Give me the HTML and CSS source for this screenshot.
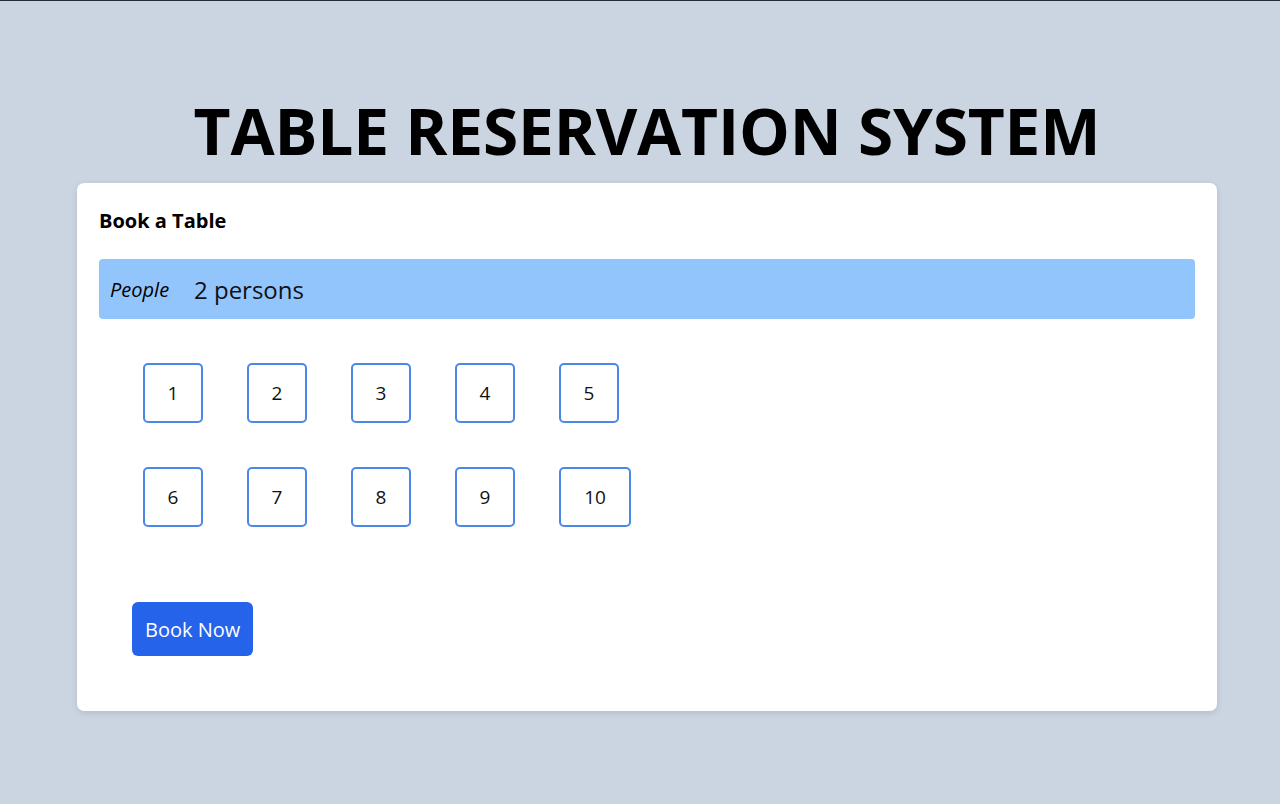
FILE: index.html
```html
<!DOCTYPE html>
<html lang="en">
<head>
<meta charset="utf-8">
<title>Table Reservation System</title>
<link rel="stylesheet" href="styles.css">
</head>
<body>
<div class="page">
  <h1 class="title">TABLE RESERVATION SYSTEM</h1>
  <div class="card">
    <h2 class="card-title">Book a Table</h2>
    <div class="people-bar">
      <span class="people-label">People</span>
      <span class="people-value">2 persons</span>
    </div>
    <div class="tables">
      <div class="table-row">
        <button class="table-btn">1</button>
        <button class="table-btn">2</button>
        <button class="table-btn">3</button>
        <button class="table-btn">4</button>
        <button class="table-btn">5</button>
      </div>
      <div class="table-row">
        <button class="table-btn">6</button>
        <button class="table-btn">7</button>
        <button class="table-btn">8</button>
        <button class="table-btn">9</button>
        <button class="table-btn table-btn--wide">10</button>
      </div>
    </div>
    <div class="actions">
      <button class="book-btn">Book Now</button>
    </div>
  </div>
</div>
</body>
</html>
```

FILE: styles.css
```css
* { box-sizing: border-box; }
html, body { margin: 0; padding: 0; }
body {
  background: #cbd5e1;
  border-top: 1px solid #262b3a;
  font-family: "Open Sans", "Noto Sans", sans-serif;
  color: #000;
  min-height: 804px;
}
.page {
  padding: 86px 63px 0 77px;
  display: flex;
  flex-direction: column;
}
.title {
  margin: 0 0 9px 0;
  font-size: 64px;
  font-weight: 700;
  text-align: center;
  line-height: normal;
  letter-spacing: -0.2px;
}
.card {
  background: #fff;
  border-radius: 7px;
  box-shadow: 0 2px 6px rgba(0,0,0,0.12);
  padding: 24px 22px 55px 22px;
  width: 1140px;
}
.card-title {
  margin: 0 0 24px 0;
  font-size: 20px;
  font-weight: 700;
  line-height: 28px;
}
.people-bar {
  background: #93c5fd;
  border-radius: 4px;
  height: 60px;
  display: flex;
  align-items: center;
  padding: 0 11px;
}
.people-label {
  font-style: italic;
  font-size: 20px;
  width: 84px;
}
.people-value {
  font-size: 24px;
  color: #111;
}
.tables {
  padding: 22px;
}
.table-row {
  display: flex;
}
.table-btn {
  margin: 22px;
  width: 60px;
  height: 60px;
  padding: 0;
  background: #fff;
  border: 2.5px solid #4a88e8;
  border-radius: 5px;
  font-family: "Open Sans", "Noto Sans", sans-serif;
  font-size: 19px;
  color: #111;
  display: flex;
  align-items: center;
  justify-content: center;
}
.table-btn--wide {
  width: 72px;
}
.actions {
  padding: 31px 0 0 33px;
}
.book-btn {
  background: #2563eb;
  color: #fff;
  border: none;
  border-radius: 6px;
  height: 54px;
  padding: 0 13px;
  font-family: "Open Sans", "Noto Sans", sans-serif;
  font-size: 20px;
}
```
